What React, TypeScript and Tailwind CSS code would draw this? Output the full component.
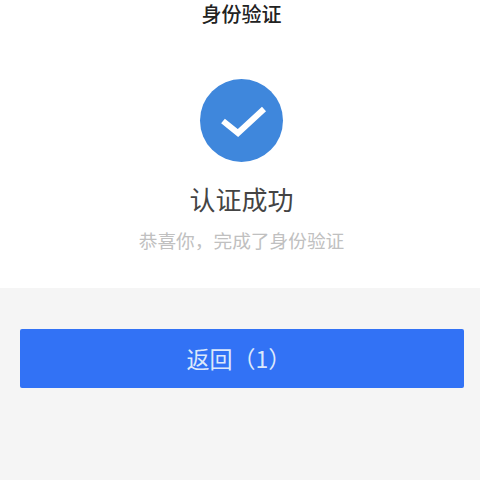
import React from 'react';

export default function App() {
  return (
    <div className="w-[480px] h-[480px] overflow-hidden flex flex-col bg-[#f5f5f5] font-['Noto_Sans_CJK_SC',sans-serif]">
      <div className="h-[288px] bg-white flex flex-col items-center shrink-0 pl-[3px]">
        <div className="text-[20px] leading-[28px] text-[#222] font-medium">身份验证</div>
        <div className="w-[83px] h-[83px] mt-[51px] rounded-full bg-[#3f87dc] flex items-center justify-center">
          <svg width="83" height="83" viewBox="0 0 83 83" fill="none">
            <path d="M23 42 L38 54 L64 30" stroke="#fff" strokeWidth="6" />
          </svg>
        </div>
        <div className="text-[26px] leading-[36px] mt-[19px] text-[#444]">认证成功</div>
        <div className="text-[18.7px] leading-[26px] mt-[10px] text-[#c0c0c0]">恭喜你，完成了身份验证</div>
      </div>
      <div className="pl-[20px] pr-[16px] pt-[41px]">
        <button className="w-full h-[59px] rounded-[2px] pr-[6px] bg-[#3272f5] text-[#dce8fb] text-[23px]">返回（1）</button>
      </div>
    </div>
  );
}
